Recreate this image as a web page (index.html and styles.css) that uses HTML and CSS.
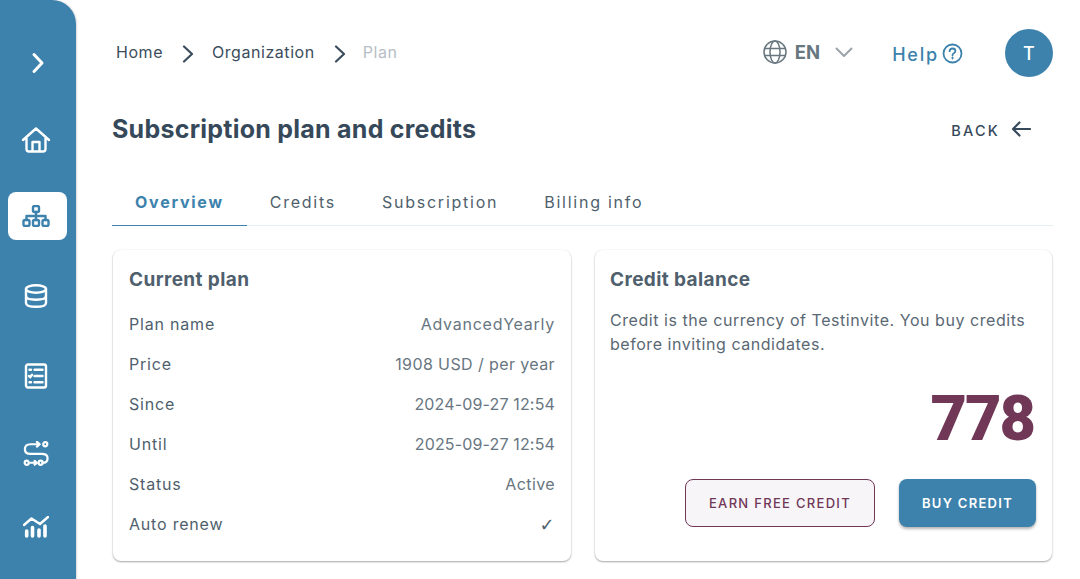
FILE: index.html
```html
<!DOCTYPE html>
<html lang="en">
<head>
    <meta charset="UTF-8">
    <meta name="viewport" content="width=device-width, initial-scale=1.0">
    <title>Subscription plan and credits</title>
    <link rel="stylesheet" href="styles.css">
</head>
<body>
    <!-- Sidebar -->
    <nav class="sidebar">
        <a href="#" class="side-item side-toggle">
            <svg width="28" height="28" viewBox="0 0 28 28"><path d="M10 5.5 L18 14 L10 22.5" /></svg>
        </a>
        <a href="#" class="side-item">
            <svg width="30" height="26" viewBox="0 0 30 26"><path d="M2 13 L15 1.5 L28 13 M5.5 11 V22 Q5.5 24.5 8 24.5 H22 Q24.5 24.5 24.5 22 V11 M11.5 24.5 V15 H18.5 V24.5" /></svg>
        </a>
        <a href="#" class="side-item side-active">
            <svg width="28" height="22" viewBox="0 0 28 22"><rect x="11" y="1" width="6" height="6" rx="1.5" /><rect x="1.5" y="15" width="6" height="6" rx="1.5" /><rect x="11" y="15" width="6" height="6" rx="1.5" /><rect x="20.5" y="15" width="6" height="6" rx="1.5" /><path d="M14 7 V15 M4.5 15 V11 H23.5 V15" /></svg>
        </a>
        <a href="#" class="side-item">
            <svg width="24" height="24" viewBox="0 0 24 24"><ellipse cx="12" cy="5" rx="10" ry="3.7" /><path d="M2 5 V19 Q2 22.8 12 22.8 Q22 22.8 22 19 V5 M2 12 Q2 15.7 12 15.7 Q22 15.7 22 12" /></svg>
        </a>
        <a href="#" class="side-item">
            <svg width="24" height="26" viewBox="0 0 24 26"><rect x="2" y="1.5" width="20" height="23" rx="2" /><path d="M10.5 6.8 H18.5 M10.5 13 H18.5 M10.5 19.2 H18.5 M5.5 6.8 H7 M5.5 19.2 H7 M5 13 L6.2 14.3 L8 11.8" /></svg>
        </a>
        <a href="#" class="side-item">
            <svg width="26" height="25" viewBox="0 0 28 27"><circle cx="24" cy="3.5" r="2.2" /><circle cx="4" cy="23.5" r="2.2" /><circle cx="19" cy="23.5" r="2.2" /><path d="M18 3.5 H8 Q2 3.5 2 9 Q2 14 8 14 H20 Q26.5 14 26.5 18.5 Q26.5 23.5 21 23.5 M15 1 L18 3.5 L15 6 M8 23.5 H14.5 M12.5 21.5 L15 23.5 L12.5 25.5" /></svg>
        </a>
        <a href="#" class="side-item">
            <svg width="26" height="22" viewBox="0 0 26 22"><path d="M1 9 L8.5 2.5 L17 8 L25 1" /><path class="bars" d="M3.7 15 V20 M9.5 11.5 V20 M16 14 V20 M22 10 V20" /></svg>
        </a>
    </nav>

    <main class="content">
        <!-- Top bar -->
        <header class="topbar">
            <div class="breadcrumb">
                <a href="#">Home</a>
                <svg class="crumb-sep" width="12" height="18" viewBox="0 0 12 18"><path d="M2 1.5 L10 9 L2 16.5" /></svg>
                <a href="#">Organization</a>
                <svg class="crumb-sep" width="12" height="18" viewBox="0 0 12 18"><path d="M2 1.5 L10 9 L2 16.5" /></svg>
                <span class="crumb-current">Plan</span>
            </div>
            <div class="top-actions">
                <div class="lang">
                    <svg width="24" height="24" viewBox="0 0 24 24"><circle cx="12" cy="12" r="11" /><ellipse cx="12" cy="12" rx="5" ry="11" /><path d="M1.5 8.5 H22.5 M1.5 15.5 H22.5" /></svg>
                    <span class="lang-code">EN</span>
                    <svg class="lang-caret" width="18" height="10" viewBox="0 0 18 10"><path d="M1 1 L9 9 L17 1" /></svg>
                </div>
                <a href="#" class="help">
                    Help
                    <svg width="21" height="21" viewBox="0 0 21 21"><circle cx="10.5" cy="10.5" r="9" /><path d="M7.6 8.2 Q7.8 5.5 10.5 5.5 Q13.4 5.5 13.4 8 Q13.4 9.5 11.8 10.2 Q10.5 10.8 10.5 12.3" /><path d="M10.5 14.4 V15.6" /></svg>
                </a>
                <div class="avatar">T</div>
            </div>
        </header>

        <div class="title-row">
            <h1>Subscription plan and credits</h1>
            <a href="#" class="back">
                BACK
                <svg width="20" height="16" viewBox="0 0 20 16"><path d="M19 8 H2 M8.5 1.5 L2 8 L8.5 14.5" /></svg>
            </a>
        </div>

        <!-- Tabs -->
        <div class="tabs">
            <a href="#" class="tab tab-active">Overview</a>
            <a href="#" class="tab">Credits</a>
            <a href="#" class="tab">Subscription</a>
            <a href="#" class="tab">Billing info</a>
        </div>

        <div class="cards">
            <section class="card">
                <h2>Current plan</h2>
                <div class="plan-row"><span class="plan-label">Plan name</span><span class="value-name">AdvancedYearly</span></div>
                <div class="plan-row"><span class="plan-label">Price</span><span>1908 USD / per year</span></div>
                <div class="plan-row"><span class="plan-label">Since</span><span class="value-date">2024-09-27 12:54</span></div>
                <div class="plan-row"><span class="plan-label">Until</span><span class="value-date">2025-09-27 12:54</span></div>
                <div class="plan-row"><span class="plan-label">Status</span><span>Active</span></div>
                <div class="plan-row"><span class="plan-label">Auto renew</span><span class="check">✓</span></div>
            </section>

            <section class="card card-credit">
                <h2>Credit balance</h2>
                <p class="credit-text">Credit is the currency of Testinvite. You buy credits before inviting candidates.</p>
                <div class="credit-amount">778</div>
                <div class="credit-buttons">
                    <button class="btn btn-outline">EARN FREE CREDIT</button>
                    <button class="btn btn-primary">BUY CREDIT</button>
                </div>
            </section>
        </div>
    </main>
</body>
</html>
```

FILE: styles.css
```css
/* General Body Styles */
* {
    box-sizing: border-box;
}

html, body {
    height: 100%;
}

body {
    font-family: Inter, "Liberation Sans", sans-serif;
    background-color: #fff;
    color: #4f5f6d;
    margin: 0;
    display: flex;
    overflow: hidden;
}

a {
    color: inherit;
    text-decoration: none;
}

/* Sidebar */
.sidebar {
    flex: 0 0 76px;
    height: 579px;
    background-color: #3c82ad;
    border-top-right-radius: 24px;
    box-shadow: 1px 0 2px rgba(0, 0, 0, 0.15);
    padding: 39px 0 0 8px;
    display: grid;
    grid-template-rows: 77px 76px 80px 80px 77px 74px 48px;
    align-content: start;
}

.side-item {
    width: 59px;
    height: 48px;
    border-radius: 8px;
    display: flex;
    align-items: center;
    justify-content: center;
}

.side-item svg {
    margin-right: 3px;
    fill: none;
    stroke: #fff;
    stroke-width: 2.4;
    stroke-linecap: round;
    stroke-linejoin: round;
}

.side-item svg .bars {
    stroke-width: 3.6;
}

.side-toggle svg {
    margin-right: 0;
    stroke-width: 3;
}

.side-active {
    background-color: #fff;
}

.side-active svg {
    stroke: #3c82ad;
}

/* Main column */
.content {
    flex: 1;
    padding: 29px 27px 0 36px;
    min-width: 0;
}

.topbar {
    height: 48px;
    display: flex;
    align-items: center;
    justify-content: space-between;
}

.breadcrumb {
    display: flex;
    align-items: center;
    gap: 19px;
    padding-left: 4px;
    margin-top: -2px;
    font-size: 16px;
    letter-spacing: 0.55px;
    color: #3b4d5c;
}

.crumb-sep {
    margin-top: 4px;
    margin-right: -1px;
    fill: none;
    stroke: #3b4d5c;
    stroke-width: 2.2;
    stroke-linecap: round;
    stroke-linejoin: round;
}

.crumb-current {
    margin-left: -1px;
    color: #b7bec4;
}

.top-actions {
    display: flex;
    align-items: center;
}

.lang {
    display: flex;
    align-items: center;
    margin-right: 39px;
    margin-top: -2px;
}

.lang svg {
    fill: none;
    stroke: #68777f;
    stroke-width: 1.5;
}

.lang-code {
    font-size: 18.5px;
    font-weight: 700;
    color: #68777f;
    margin: 0 15px 0 8px;
}

.lang .lang-caret {
    stroke: #9aa4ab;
    stroke-width: 2;
}

.help {
    display: flex;
    align-items: center;
    gap: 3px;
    margin-right: 42px;
    margin-top: 2px;
    font-size: 18px;
    font-weight: 500;
    letter-spacing: 1.8px;
    color: #3c82ad;
}

.help svg {
    margin-top: -2px;
    fill: none;
    stroke: #3c82ad;
    stroke-width: 1.8;
    stroke-linecap: round;
}

.avatar {
    width: 48px;
    height: 48px;
    border-radius: 50%;
    background-color: #3c82ad;
    color: #fff;
    font-size: 18px;
    font-weight: 500;
    display: flex;
    align-items: center;
    justify-content: center;
}

.title-row {
    margin-top: 30px;
    height: 44px;
    display: flex;
    align-items: center;
    justify-content: space-between;
}

h1 {
    margin: 0;
    font-size: 25px;
    letter-spacing: 0.25px;
    font-weight: 700;
    color: #36495a;
}

.back {
    display: flex;
    align-items: center;
    gap: 11px;
    margin-top: 2px;
    padding-right: 22px;
    font-size: 14.5px;
    font-weight: 500;
    letter-spacing: 2.2px;
    color: #36495a;
}

.back svg {
    margin-top: -2px;
    fill: none;
    stroke: #36495a;
    stroke-width: 2.2;
    stroke-linecap: round;
    stroke-linejoin: round;
}

/* Tabs */
.tabs {
    margin-top: 31px;
    height: 44px;
    display: flex;
    border-bottom: 1px solid #e6eef2;
}

.tab {
    height: 44px;
    padding: 6px 23px 0;
    font-size: 16px;
    letter-spacing: 1.75px;
    color: #4f5f6d;
    line-height: 28px;
}

.tab-active {
    font-weight: 700;
    color: #3c82ad;
    border-bottom: 1px solid #3c82ad;
}

/* Cards */
.cards {
    margin-top: 24px;
    display: grid;
    grid-template-columns: 458px 457px;
    gap: 24px;
    padding-left: 1px;
}

.card {
    height: 311px;
    padding: 16px;
    background-color: #fff;
    border-radius: 8px;
    box-shadow: 0 1px 2px rgba(0, 0, 0, 0.35), 0 0 2px rgba(0, 0, 0, 0.06);
}

.card-credit {
    padding-left: 15px;
}

h2 {
    margin: 0 0 10px;
    font-size: 19px;
    letter-spacing: 0.4px;
    line-height: 28px;
    font-weight: 700;
    color: #4f5f6d;
}

.plan-row {
    height: 40px;
    display: flex;
    align-items: center;
    justify-content: space-between;
    font-size: 16px;
    letter-spacing: 0.4px;
    color: #687681;
}

.plan-label {
    letter-spacing: 0.8px;
    color: #4f5f6d;
}

.value-name {
    letter-spacing: 0.75px;
}

.value-date {
    letter-spacing: 0.15px;
}

.check {
    font-family: "DejaVu Sans", sans-serif;
    font-size: 18px;
    color: #4f5f6d;
}

.credit-text {
    margin: 14px 0 0;
    font-size: 16px;
    letter-spacing: 0.55px;
    line-height: 24px;
    color: #5a6874;
}

.credit-amount {
    margin-top: 27px;
    text-align: right;
    padding-right: 2px;
    font-family: Roboto, sans-serif;
    font-size: 63px;
    letter-spacing: -2px;
    line-height: 72px;
    font-weight: 900;
    color: #703757;
}

/* Buttons */
.credit-buttons {
    margin-top: 24px;
    display: flex;
    justify-content: flex-end;
    gap: 24px;
}

.btn {
    height: 48px;
    border-radius: 8px;
    font-family: inherit;
    font-size: 13px;
    font-weight: 500;
    letter-spacing: 1.3px;
    cursor: pointer;
}

.btn-outline {
    width: 190px;
    background-color: #f8f5f9;
    border: 1px solid #703757;
    color: #703757;
}

.btn-primary {
    width: 137px;
    background-color: #3c82ad;
    border: none;
    color: #fff;
    font-weight: 600;
    box-shadow: 0 2px 3px rgba(0, 0, 0, 0.3);
}
```
